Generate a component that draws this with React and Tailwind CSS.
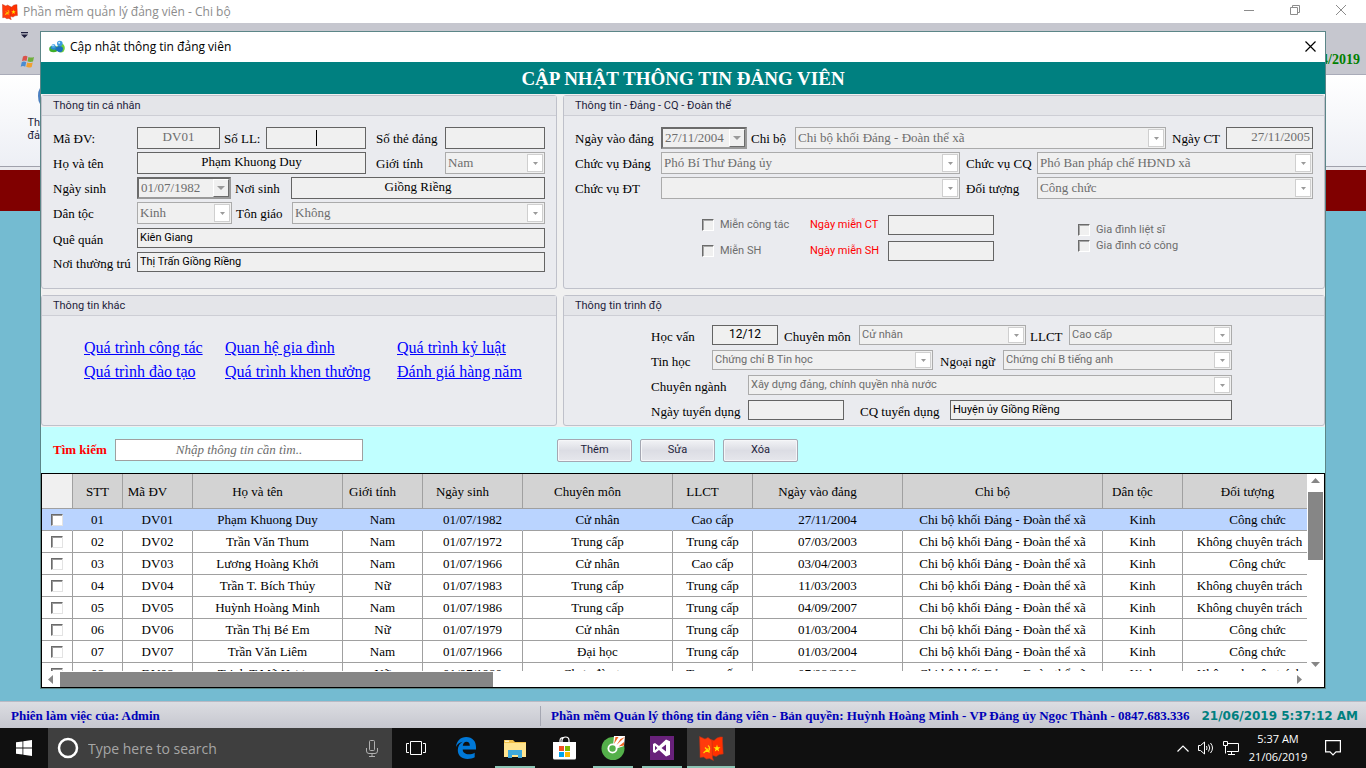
import React from 'react';

const COLUMNS = [
    { title: 'STT', width: 'w-[50px]' },
    { title: 'Mã ĐV', width: 'w-[70px]' },
    { title: 'Họ và tên', width: 'w-[150px]' },
    { title: 'Giới tính', width: 'w-[80px]' },
    { title: 'Ngày sinh', width: 'w-[100px]' },
    { title: 'Chuyên môn', width: 'w-[150px]' },
    { title: 'LLCT', width: 'w-[80px]' },
    { title: 'Ngày vào đảng', width: 'w-[150px]' },
    { title: 'Chi bộ', width: 'w-[200px]' },
    { title: 'Dân tộc', width: 'w-[80px]' },
    { title: 'Đối tượng', width: 'w-[150px]' },
];

const CHI_BO = 'Chi bộ khối Đảng - Đoàn thể xã';

const MEMBERS = [
    ['01', 'DV01', 'Phạm Khuong Duy', 'Nam', '01/07/1982', 'Cử nhân', 'Cao cấp', '27/11/2004', CHI_BO, 'Kinh', 'Công chức'],
    ['02', 'DV02', 'Trần Văn Thum', 'Nam', '01/07/1972', 'Trung cấp', 'Trung cấp', '07/03/2003', CHI_BO, 'Kinh', 'Không chuyên trách'],
    ['03', 'DV03', 'Lương Hoàng Khởi', 'Nam', '01/07/1966', 'Cử nhân', 'Cao cấp', '03/04/2003', CHI_BO, 'Kinh', 'Công chức'],
    ['04', 'DV04', 'Trần T. Bích Thủy', 'Nữ', '01/07/1983', 'Trung cấp', 'Trung cấp', '11/03/2003', CHI_BO, 'Kinh', 'Không chuyên trách'],
    ['05', 'DV05', 'Huỳnh Hoàng Minh', 'Nam', '01/07/1986', 'Trung cấp', 'Trung cấp', '04/09/2007', CHI_BO, 'Kinh', 'Không chuyên trách'],
    ['06', 'DV06', 'Trần Thị Bé Em', 'Nữ', '01/07/1979', 'Cử nhân', 'Trung cấp', '01/03/2004', CHI_BO, 'Kinh', 'Công chức'],
    ['07', 'DV07', 'Trần Văn Liêm', 'Nam', '01/07/1966', 'Đại học', 'Trung cấp', '01/03/2004', CHI_BO, 'Kinh', 'Công chức'],
    ['08', 'DV08', 'Trịnh T.Mỹ Hương', 'Nữ', '01/07/1980', 'Chưa đào tạo', 'Trung cấp', '07/08/2013', CHI_BO, 'Kinh', 'Không chuyên trách'],
];

const SERIF = "font-['Liberation_Serif',serif]";
const SANS = "font-['Roboto',sans-serif]";

/* ---------- form parts ---------- */

function Label({ htmlFor, className = '', children }) {
    return (
        <label htmlFor={htmlFor} className={`shrink-0 whitespace-nowrap pt-[3px] text-[13px] leading-[17px] text-black ${className}`}>
            {children}
        </label>
    );
}

function TextField({ id, value = '', className = '', textClass = 'text-black', height = 'h-[22px]' }) {
    return (
        <input
            id={id}
            type="text"
            defaultValue={value}
            className={`block min-w-0 border border-[#646464] bg-[#f0f0f0] px-0.5 pb-0.5 outline-none ${height} ${textClass} ${className}`}
        />
    );
}

function SelectField({ id, value = '', className = '', textClass = 'pb-0.5 text-[13px]', height = 'h-[22px]' }) {
    return (
        <div className={`relative min-w-0 ${height} ${className}`}>
            <select
                id={id}
                defaultValue={value}
                className={`block h-full w-full appearance-none border border-[#ababab] bg-[#f0f0f0] pl-0.5 text-[#6d6d6d] outline-none ${textClass}`}
            >
                <option value={value}>{value}</option>
            </select>
            <span className="pointer-events-none absolute inset-y-[2px] right-[2px] flex w-4 items-center justify-center border border-[#cfcfcf] bg-white">
                <svg width="5" height="3" viewBox="0 0 5 3" fill="#9a9a9a">
                    <path d="M0 0h5L2.5 3z" />
                </svg>
            </span>
        </div>
    );
}

function DateField({ id, value, className = '' }) {
    return (
        <div className={`flex h-[22px] border-2 border-t-[#6b6b6b] border-l-[#6b6b6b] border-r-[#9a9a9a] border-b-[#9a9a9a] bg-[#f0f0f0] ${className}`}>
            <input id={id} type="text" defaultValue={value} className="w-0 flex-1 pl-0.5 text-[13px] text-[#6d6d6d] outline-none" />
            <button
                type="button"
                aria-label="Chọn ngày"
                className="flex w-4 items-center justify-center border border-t-white border-l-white border-r-[#6b6b6b] border-b-[#6b6b6b] bg-[#f0f0f0]"
            >
                <svg width="8" height="4" viewBox="0 0 8 4" fill="#9a9a9a">
                    <path d="M0 0h8L4 4z" />
                </svg>
            </button>
        </div>
    );
}

function CheckField({ id, children }) {
    return (
        <div className="flex h-4 items-center gap-1.5">
            <input
                id={id}
                type="checkbox"
                className="size-3 appearance-none border border-t-[#6b6b6b] border-l-[#6b6b6b] border-r-white border-b-white bg-[#f0f0f0] shadow-[inset_1px_1px_0_#a8a8a8]"
            />
            <label htmlFor={id} className={`whitespace-nowrap text-[11px] text-[#6d6d6d] ${SANS}`}>
                {children}
            </label>
        </div>
    );
}

function Group({ title, className = '', children }) {
    return (
        <fieldset className="min-w-0 rounded-[3px] border border-[#bfc1ca] bg-[#eaebef]">
            <h2 className={`h-5 border-b border-[#cdced5] bg-[#e4e5e9] px-[11px] text-[11px] leading-5 text-[#1e1e3c] ${SANS}`}>{title}</h2>
            <div className={className}>{children}</div>
        </fieldset>
    );
}

/* ---------- groups ---------- */

function PersonalGroup() {
    return (
        <Group title="Thông tin cá nhân" className="flex flex-col gap-1 px-[11px] pt-[11px] pb-4">
            <div className="flex flex-col gap-[3px]">
                <div className="flex">
                    <Label htmlFor="ma-dv" className="w-[84px]">Mã ĐV:</Label>
                    <TextField id="ma-dv" value="DV01" className="w-[83px] text-center" textClass="text-[13px] text-[#6d6d6d]" />
                    <Label htmlFor="so-ll" className="ml-1 w-[42px]">Số LL:</Label>
                    <div className="relative w-[100px]">
                        <TextField id="so-ll" className="w-full text-center text-[13px]" />
                        <span className="absolute top-[3px] left-1/2 h-4 w-px bg-black" />
                    </div>
                    <Label htmlFor="so-the" className="ml-2.5 w-[69px]">Số thẻ đảng</Label>
                    <TextField id="so-the" className="flex-1 text-[13px]" />
                </div>
                <div className="flex">
                    <Label htmlFor="ho-ten" className="w-[84px]">Họ và tên</Label>
                    <TextField id="ho-ten" value="Phạm Khuong Duy" className="w-[229px] text-center text-[13px]" />
                    <Label htmlFor="gioi-tinh" className="ml-2.5 w-[69px]">Giới tính</Label>
                    <SelectField id="gioi-tinh" value="Nam" className="flex-1" />
                </div>
                <div className="flex">
                    <Label htmlFor="ngay-sinh" className="w-[84px]">Ngày sinh</Label>
                    <DateField id="ngay-sinh" value="01/07/1982" className="w-[94px]" />
                    <Label htmlFor="noi-sinh" className="ml-1 w-14">Nơi sinh</Label>
                    <TextField id="noi-sinh" value="Giồng Riềng" className="flex-1 text-center text-[13px]" />
                </div>
                <div className="flex">
                    <Label htmlFor="dan-toc" className="w-[84px]">Dân tộc</Label>
                    <SelectField id="dan-toc" value="Kinh" className="w-[95px]" />
                    <Label htmlFor="ton-giao" className="ml-1 w-14">Tôn giáo</Label>
                    <SelectField id="ton-giao" value="Không" className="flex-1" />
                </div>
            </div>
            <div className="flex flex-col gap-1">
                <div className="flex">
                    <Label htmlFor="que-quan" className="w-[84px]">Quê quán</Label>
                    <TextField id="que-quan" value="Kiên Giang" height="h-5" className={`flex-1 text-[11px] ${SANS}`} />
                </div>
                <div className="flex">
                    <Label htmlFor="thuong-tru" className="w-[84px]">Nơi thường trú</Label>
                    <TextField id="thuong-tru" value="Thị Trấn Giồng Riềng" height="h-5" className={`flex-1 text-[11px] ${SANS}`} />
                </div>
            </div>
        </Group>
    );
}

function PartyGroup() {
    return (
        <Group title="Thông tin - Đảng - CQ - Đoàn thể" className="px-[11px] pt-[11px] pb-4">
            <div className="flex flex-col gap-[3px]">
                <div className="flex">
                    <Label htmlFor="ngay-vao" className="w-[86px]">Ngày vào đảng</Label>
                    <DateField id="ngay-vao" value="27/11/2004" className="w-[86px]" />
                    <Label htmlFor="chi-bo" className="ml-1 w-11">Chi bộ</Label>
                    <SelectField id="chi-bo" value="Chi bộ khối Đảng - Đoàn thể xã" className="flex-1" />
                    <Label htmlFor="ngay-ct" className="ml-1.5 w-[54px]">Ngày CT</Label>
                    <TextField id="ngay-ct" value="27/11/2005" className="w-[87px] text-right" textClass="text-[13px] text-[#6d6d6d]" />
                </div>
                <div className="flex">
                    <Label htmlFor="cv-dang" className="w-[86px]">Chức vụ Đảng</Label>
                    <SelectField id="cv-dang" value="Phó Bí Thư Đảng ủy" className="w-[299px]" />
                    <Label htmlFor="cv-cq" className="ml-1.5 w-[71px]">Chức vụ CQ</Label>
                    <SelectField id="cv-cq" value="Phó Ban pháp chế HĐND xã" className="flex-1" />
                </div>
                <div className="flex">
                    <Label htmlFor="cv-dt" className="w-[86px]">Chức vụ ĐT</Label>
                    <SelectField id="cv-dt" className="w-[299px]" />
                    <Label htmlFor="doi-tuong" className="ml-1.5 w-[71px]">Đối tượng</Label>
                    <SelectField id="doi-tuong" value="Công chức" className="flex-1" />
                </div>
            </div>
            <div className="mt-4 flex items-center pl-[127px]">
                <div className="flex w-[108px] flex-col gap-2.5">
                    <CheckField id="mien-ct">Miễn công tác</CheckField>
                    <CheckField id="mien-sh">Miễn SH</CheckField>
                </div>
                <div className="flex flex-col gap-1.5">
                    <div className="flex items-center">
                        <label htmlFor="ngay-mien-ct" className={`w-[78px] text-[11px] text-[#ff0000] ${SANS}`}>Ngày miễn CT</label>
                        <TextField id="ngay-mien-ct" height="h-5" className="w-[106px] text-[13px]" />
                    </div>
                    <div className="flex items-center">
                        <label htmlFor="ngay-mien-sh" className={`w-[78px] text-[11px] text-[#ff0000] ${SANS}`}>Ngày miễn SH</label>
                        <TextField id="ngay-mien-sh" height="h-5" className="w-[106px] text-[13px]" />
                    </div>
                </div>
                <div className="ml-[84px] flex flex-col">
                    <CheckField id="gd-ls">Gia đình liệt sĩ</CheckField>
                    <CheckField id="gd-cc">Gia đình có công</CheckField>
                </div>
            </div>
        </Group>
    );
}

const LINKS = [
    'Quá trình công tác', 'Quan hệ gia đình', 'Quá trình kỷ luật',
    'Quá trình đào tạo', 'Quá trình khen thưởng', 'Đánh giá hàng năm',
];

function OtherGroup() {
    return (
        <Group title="Thông tin khác" className="grid grid-cols-[141px_172px_1fr] pt-5 pl-[42px]">
            {LINKS.map((text) => (
                <a key={text} href="#" className="h-6 text-base leading-6 whitespace-nowrap text-[#0000ff] underline">{text}</a>
            ))}
        </Group>
    );
}

function EducationGroup() {
    const small = `text-[11px] ${SANS}`;
    return (
        <Group title="Thông tin trình độ" className="flex flex-col gap-[5px] pt-[9px] pr-[92px] pb-[5px] pl-[87px]">
            <div className="flex">
                <Label htmlFor="hoc-van" className="w-[61px]">Học vấn</Label>
                <TextField id="hoc-van" value="12/12" height="h-5" className={`w-[66px] text-center text-xs ${SANS}`} />
                <Label htmlFor="chuyen-mon" className="ml-1.5 w-[75px]">Chuyên môn</Label>
                <SelectField id="chuyen-mon" value="Cử nhân" height="h-5" className="flex-1" textClass={small} />
                <Label htmlFor="llct" className="ml-1 w-[39px]">LLCT</Label>
                <SelectField id="llct" value="Cao cấp" height="h-5" className="w-[163px]" textClass={small} />
            </div>
            <div className="flex">
                <Label htmlFor="tin-hoc" className="w-[61px]">Tin học</Label>
                <SelectField id="tin-hoc" value="Chứng chỉ B Tin học" height="h-5" className="flex-1" textClass={small} />
                <Label htmlFor="ngoai-ngu" className="ml-[7px] w-[63px]">Ngoại ngữ</Label>
                <SelectField id="ngoai-ngu" value="Chứng chỉ B tiếng anh" height="h-5" className="w-[229px]" textClass={small} />
            </div>
            <div className="flex">
                <Label htmlFor="chuyen-nganh" className="w-[97px]">Chuyên ngành</Label>
                <SelectField id="chuyen-nganh" value="Xây dựng đảng, chính quyền nhà nước" height="h-5" className="flex-1" textClass={small} />
            </div>
            <div className="flex">
                <Label htmlFor="ngay-td" className="w-[97px]">Ngày tuyển dụng</Label>
                <TextField id="ngay-td" height="h-5" className="w-24 text-[13px]" />
                <Label htmlFor="cq-td" className="ml-4 w-[90px]">CQ tuyển dụng</Label>
                <TextField id="cq-td" value="Huyện ủy Giồng Riềng" height="h-5" className={`flex-1 text-[11px] ${SANS}`} />
            </div>
        </Group>
    );
}

function SearchBar() {
    return (
        <div className="mt-px flex h-[46px] items-center bg-[#c0ffff] px-3">
            <label htmlFor="tim-kiem" className="w-[62px] text-[13px] font-bold text-[#ff0000]">Tìm kiếm</label>
            <input
                id="tim-kiem"
                type="text"
                placeholder="Nhập thông tin cần tìm.."
                className="mr-[194px] h-[22px] w-[248px] border border-[#a0a0a0] bg-white text-center text-[13px] italic outline-none placeholder:text-[#6d6d6d]"
            />
            <div className="flex gap-2">
                {['Thêm', 'Sửa', 'Xóa'].map((text) => (
                    <button
                        key={text}
                        type="button"
                        className={`h-[23px] w-[75px] rounded-[2px] border border-[#a5a7b2] bg-linear-to-b from-[#f2f3f6] via-[#dcdde4] to-[#e6e7ec] text-[11px] text-[#1e1e3c] shadow-[inset_0_0_0_1px_#f5f6f8] ${SANS}`}
                    >
                        {text}
                    </button>
                ))}
            </div>
        </div>
    );
}

/* ---------- table ---------- */

function RowCheck({ label }) {
    return (
        <input
            type="checkbox"
            aria-label={label}
            className="mx-auto block size-3 appearance-none border border-t-[#6b6b6b] border-l-[#6b6b6b] border-r-[#e3e3e3] border-b-[#e3e3e3] bg-white shadow-[inset_1px_1px_0_#9a9a9a]"
        />
    );
}

function MemberTable() {
    return (
        <div className="border border-black bg-white">
            <div className="flex">
                <div className="h-[197px] min-w-0 flex-1 overflow-hidden">
                    <table className="w-[1291px] table-fixed border-separate border-spacing-0 text-[13px] text-black">
                        <thead>
                            <tr className="h-[35px]">
                                <th className="w-[31px] border-r border-b border-[#a0a0a0] bg-[#f0f0f0] p-0" />
                                {COLUMNS.map((col) => (
                                    <th
                                        key={col.title}
                                        className={`border-r border-b border-[#a0a0a0] bg-[#d3d3d3] p-0 pt-0.5 font-normal ${col.width} ${col.title === 'STT' ? '' : 'pr-5'}`}
                                    >
                                        {col.title}
                                    </th>
                                ))}
                            </tr>
                        </thead>
                        <tbody>
                            {MEMBERS.map((row, i) => {
                                const cell = i === 0 ? 'border-r-[#bad4ff] bg-[#bad4ff]' : 'border-r-[#a0a0a0]';
                                return (
                                    <tr key={row[0]} className="h-[22px]">
                                        <td className={`border-r border-b border-b-[#a0a0a0] p-0 ${cell}`}>
                                            <RowCheck label={row[1]} />
                                        </td>
                                        {row.map((text, j) => (
                                            <td
                                                key={COLUMNS[j].title}
                                                className={`overflow-hidden border-r border-b border-b-[#a0a0a0] p-0 text-center leading-5 whitespace-nowrap ${cell} ${text === 'Không chuyên trách' ? 'pr-4' : ''}`}
                                            >
                                                {text}
                                            </td>
                                        ))}
                                    </tr>
                                );
                            })}
                        </tbody>
                    </table>
                </div>
                <div className="flex w-[17px] flex-col items-center py-1">
                    <svg width="9" height="5" viewBox="0 0 9 5" fill="#868686"><path d="M4.5 0L9 5H0z" /></svg>
                    <div className="mt-[9px] h-[68px] w-[15px] bg-[#868686]" />
                    <svg className="mt-auto" width="9" height="5" viewBox="0 0 9 5" fill="#868686"><path d="M0 0h9L4.5 5z" /></svg>
                </div>
            </div>
            <div className="flex h-4 items-center justify-between pr-[22px] pl-1.5">
                <div className="flex items-center gap-[7px]">
                    <svg width="5" height="9" viewBox="0 0 5 9" fill="#868686"><path d="M5 0v9L0 4.5z" /></svg>
                    <div className="h-[15px] w-[433px] bg-[#868686]" />
                </div>
                <svg width="5" height="9" viewBox="0 0 5 9" fill="#868686"><path d="M0 0l5 4.5L0 9z" /></svg>
            </div>
        </div>
    );
}

/* ---------- icons ---------- */

function FlagIcon({ size }) {
    return (
        <svg width={size} height={size} viewBox="0 0 25 25">
            <path d="M10 3l5 1.500 3-2.500 3-1h2.500v4l.7 13-4 .5-3 2-7-2z" fill="#ff3000" stroke="#b8331a" strokeWidth=".6" />
            <path d="M.5.500L6 3l3-1.500 4 3 .5 17 1 3-4-2-3 .5-3-2-3.500.500L1 15z" fill="#ff3a0c" stroke="#b8331a" strokeWidth=".6" />
            <path d="M4.500 17l5-4.500M6 11.500l4.500 5M9 9.500c2.500 1.500 2 5.500-.5 6H5.500" stroke="#ffd800" fill="none" strokeWidth="1.200" />
            <path d="M18 8.500l.8 2.700h2.700l-2.100 1.700.8 2.700-2.200-1.600-2.200 1.600.8-2.700-2.100-1.700h2.700z" fill="#ffe600" />
        </svg>
    );
}

function DialogIcon() {
    return (
        <svg width="16" height="14" viewBox="0 0 16 14">
            <ellipse cx="4.500" cy="9" rx="4.300" ry="3.200" fill="#3fae2a" />
            <ellipse cx="12" cy="8" rx="3.800" ry="4.500" fill="#6ccf3c" />
            <path d="M1.500 8.500C1.500 5 7 4.500 7 7.500s-2 3-5.500 1z" fill="#2a86cf" />
            <circle cx="4.500" cy="6" r="2" fill="#4aa6e6" />
            <path d="M6.500 9.500c0-4.500 7.500-4.500 7.500-1 0 4-4 5.500-7.500 1z" fill="#1b6fbd" />
            <circle cx="10.800" cy="3.500" r="2.800" fill="#3a9ade" />
            <circle cx="10.200" cy="2.800" r="1" fill="#c8ebff" />
            <circle cx="4" cy="5.400" r=".8" fill="#c8ebff" />
        </svg>
    );
}

function WindowsFlag() {
    return (
        <svg width="15" height="14" viewBox="0 0 15 14">
            <path d="M3 1.500c2-1 3-.8 4.500 0L6.500 6C5 5.300 3.500 5.300 2 6z" fill="#d9534a" />
            <path d="M8.500 2c2 .8 3.500.8 5.500 0l-1 4.500c-2 .7-4 .6-5.500-.2z" fill="#6fae3c" />
            <path d="M1.700 7.200c1.500-.8 3-.8 4.500 0l-1 4.500c-1.500-.8-3-.8-4.500 0z" fill="#4a8cd2" />
            <path d="M7.200 7.500c2 .8 3.500.8 5.500 0l-1 4.500c-2 .9-4 .8-5.500-.2z" fill="#f0a030" />
        </svg>
    );
}

function EdgeIcon() {
    return (
        <svg width="20" height="22" viewBox="0 0 20 22" fill="#0078d7">
            <path d="M0 10C.5 4 4.500 0 10.200 0 16.500 0 20 4.400 20 10v2.600H6.700c.2 3.300 2.800 4.700 6 4.700 2.300 0 4.300-.6 6-1.600v4.600c-2 1.100-4.400 1.700-7.200 1.700C5.500 22 1.800 18.500 1.800 13c0-3.600 1.900-6.600 5-8.200C3.500 5.300 1.300 7.300 0 10zm6.800-1.300h7c0-2.500-1-3.900-3.300-3.900-2 0-3.300 1.500-3.700 3.900z" />
        </svg>
    );
}

function FolderIcon() {
    return (
        <svg width="22" height="19" viewBox="0 0 22 19">
            <path d="M0 1h9l2 2h11v15H0z" fill="#f0c04a" />
            <path d="M0 4h22v14H0z" fill="#ffe48f" />
            <path d="M4 19v-8h14v8h-4v-3H8v3z" fill="#3ea9dc" />
            <path d="M1 1.500h4V3H1z" fill="#fff2c0" />
        </svg>
    );
}

function StoreIcon() {
    return (
        <svg width="24" height="24" viewBox="0 0 24 24">
            <path d="M8 7V4.500a3 3 0 0 1 4-2.800M10 7V4.500a3.500 3.500 0 0 1 7 0V7" fill="none" stroke="#fff" strokeWidth="1.200" />
            <path d="M1 6h23v16q0 1.500-1.500 1.500h-20Q1 23.500 1 22z" fill="#fff" />
            <path d="M7 10h5v5H7z" fill="#f25022" />
            <path d="M13 10h5v5h-5z" fill="#7fba00" />
            <path d="M7 16h5v5H7z" fill="#00a4ef" />
            <path d="M13 16h5v5h-5z" fill="#ffb900" />
        </svg>
    );
}

function BrowserIcon() {
    return (
        <svg width="24" height="24" viewBox="0 0 24 24">
            <circle cx="12" cy="12.500" r="11.500" fill="#54b04a" />
            <path d="M12 10l1-10h11l-1 10-9 3z" fill="#fff" />
            <path d="M13 8l1.500-7h3zM15.500 9l4-6L24 1zM17.500 10.500L23 6v3.500z" fill="#f26522" />
            <circle cx="11.500" cy="12.500" r="5" fill="#fff" />
            <circle cx="11.500" cy="12.500" r="3.200" fill="#54b04a" />
        </svg>
    );
}

function StudioIcon() {
    return (
        <svg width="24" height="24" viewBox="0 0 24 24">
            <path d="M0 0h24v24H0z" fill="#68217a" />
            <path d="M16 3.500l4 1.700v13.600l-4 1.700-7-6.500-4 3-2-1V8l2-1 4 3zM5 9.700v4.600L7.400 12zM16 8.500L11.500 12l4.500 3.500z" fill="#fff" fillRule="evenodd" />
        </svg>
    );
}

/* ---------- taskbar ---------- */

function TaskButton({ label, active = false, running = false, className = '', children }) {
    return (
        <button
            type="button"
            aria-label={label}
            className={`relative flex h-10 w-12 items-center justify-center ${active ? 'bg-[#3a3a3a]' : ''} ${className}`}
        >
            {children}
            {running && <span className={`absolute bottom-0 h-0.5 bg-[#8cc4b4] ${active ? 'inset-x-0' : 'inset-x-1'}`} />}
        </button>
    );
}

function Taskbar() {
    return (
        <footer className="flex h-10 bg-[#101010] text-white">
            <TaskButton label="Start">
                <svg width="16" height="16" viewBox="0 0 16 16" fill="#fff">
                    <path d="M0 2.300L6.500 1.400v6.200H0zM7.300 1.300L16 0v7.600H7.300zM0 8.400h6.500v6.200L0 13.700zM7.300 8.400H16V16l-8.700-1.300z" />
                </svg>
            </TaskButton>
            <div className="flex w-[344px] items-center bg-[#3f3f3f] pr-3.5 pl-[9px]">
                <svg width="22" height="22" viewBox="0 0 22 22"><circle cx="11" cy="11" r="9" fill="none" stroke="#fff" strokeWidth="2.500" /></svg>
                <input
                    type="text"
                    aria-label="Search"
                    placeholder="Type here to search"
                    className="ml-[9px] min-w-0 flex-1 pt-px font-['Open_Sans',sans-serif] text-sm outline-none placeholder:text-[#a6a6a6]"
                />
                <svg width="12" height="17" viewBox="0 0 12 17" fill="none" stroke="#b0b0b0">
                    <path d="M3.500 1.500q0-1 1-1h3q1 0 1 1v8q0 1-1 1h-3q-1 0-1-1zM.5 8v3q0 2.500 2.500 2.500h6q2.500 0 2.500-2.500V8M6 13.500v3M3 16.500h6" />
                </svg>
            </div>
            <div className="flex gap-px">
                <TaskButton label="Task view" className="mr-px">
                    <svg width="20" height="14" viewBox="0 0 20 14" fill="none" stroke="#fff">
                        <path d="M4.500.5h11v13h-11zM3 2.500H.5v9H3M17 2.500h2.500v9H17" />
                    </svg>
                </TaskButton>
                <TaskButton label="Edge"><EdgeIcon /></TaskButton>
                <TaskButton label="File Explorer" running><FolderIcon /></TaskButton>
                <TaskButton label="Store"><StoreIcon /></TaskButton>
                <TaskButton label="Browser" running><BrowserIcon /></TaskButton>
                <TaskButton label="Visual Studio" running><StudioIcon /></TaskButton>
                <TaskButton label="Đảng viên" running active><FlagIcon size={25} /></TaskButton>
            </div>
            <div className="ml-auto flex items-center pr-[25px]">
                <svg width="12" height="7" viewBox="0 0 12 7" fill="none" stroke="#fff" strokeWidth="1.200"><path d="M.5 6.500L6 1l5.500 5.500" /></svg>
                <svg className="ml-[9px]" width="17" height="14" viewBox="0 0 17 14" fill="none" stroke="#fff">
                    <path d="M.5 4.500h2l4-3.500v12l-4-3.500h-2zM8.500 5q1 2 0 4M10.500 3.500q2.500 3.500 0 7M12.500 2q4 5 0 10" />
                </svg>
                <svg className="ml-2" width="16" height="14" viewBox="0 0 16 14" fill="none" stroke="#fff">
                    <path d="M5 2.500h10.500v8H4M.5.500h4v4h-4zM2.500 4.500v8M5 13.500h7M8.500 10.500v3" />
                </svg>
                <div className="ml-2 w-[62px] text-center font-['Open_Sans',sans-serif] text-[11px] leading-[18px] whitespace-nowrap">
                    <div>5:37 AM</div>
                    <div>21/06/2019</div>
                </div>
                <svg className="ml-4" width="16" height="16" viewBox="0 0 16 16" fill="none" stroke="#fff" strokeWidth="1.200">
                    <path d="M.6.6h14.800v11.300H11L8 15l-3-3.100H.6z" />
                </svg>
            </div>
        </footer>
    );
}

/* ---------- windows ---------- */

function MainWindow() {
    return (
        <>
            <header className="flex h-[23px] items-center bg-white pr-5 pl-0.5">
                <FlagIcon size={16} />
                <h1 className="ml-[5px] flex-1 font-['Open_Sans',sans-serif] text-xs text-[#8c8c8c]">Phần mềm quản lý đảng viên - Chi bộ</h1>
                <div className="flex items-center gap-9 pb-1 text-[#8c8c8c]">
                    <svg width="10" height="10" viewBox="0 0 10 10" stroke="currentColor"><path d="M0 5.500h10" /></svg>
                    <svg width="10" height="10" viewBox="0 0 10 10" fill="none" stroke="currentColor"><path d="M.5 2.500h7v7h-7zM2.500 2V.5h7v7H8" /></svg>
                    <svg width="10" height="10" viewBox="0 0 10 10" stroke="currentColor"><path d="M0 0l10 10M10 0L0 10" /></svg>
                </div>
            </header>
            <div className="flex h-[52px] justify-between border-b border-[#a9abb8] bg-[#c6c7cf] pt-[9px] pr-1.5 pl-5">
                <div className="flex flex-col gap-[17px]">
                    <svg width="9" height="6" viewBox="0 0 9 6" fill="#1e1e3c"><path d="M1 0h7v1.200H1zM1 2.500h7L4.500 6z" /></svg>
                    <WindowsFlag />
                </div>
                <span className="self-end pb-1 text-sm font-bold text-[#008000]">4/2019</span>
            </div>
            <div className="flex h-[92px] border-b border-[#a0a1ac] bg-linear-to-b from-white to-[#edeff5]">
                <div className={`flex w-10 flex-col items-end pt-3 text-[11px] leading-[13px] text-[#1e1e3c] ${SANS}`}>
                    <svg className="mb-[11px]" width="2" height="18" viewBox="0 0 2 18"><path d="M2 1Q0 4 0 9t2 8z" fill="#4a7fc0" /></svg>
                    <span>Th</span>
                    <span>đả</span>
                </div>
            </div>
            <div className="h-[3px] bg-[#e8e9ee]" />
            <div className="h-[41px] bg-[#800000]" />
            <div className="flex-1 bg-[#74bbd1]" />
            <div className="flex h-[27px] items-center border-t border-[#b9bac4] bg-linear-to-b from-[#dcdde2] to-[#c6c7cf] pt-0.5 pr-2 pl-[11px] text-[13px] font-bold whitespace-nowrap text-[#0000b8]">
                <span className="flex-1">Phiên làm việc của: Admin</span>
                <span className="border-l border-[#a5a7b2] pl-2.5">
                    Phần mềm Quản lý thông tin đảng viên - Bản quyền: Huỳnh Hoàng Minh - VP Đảng ủy Ngọc Thành - 0847.683.336
                </span>
                <time className="ml-3 font-['DejaVu_Sans',sans-serif] text-xs text-[#008080]">21/06/2019 5:37:12 AM</time>
            </div>
        </>
    );
}

function MemberDialog() {
    return (
        <section role="dialog" aria-label="Cập nhật thông tin đảng viên" className="absolute inset-x-10 top-[31px] border border-[#5c8688] bg-[#f0f0f0]">
            <div className="flex h-[30px] items-center bg-white pr-[9px] pl-2">
                <DialogIcon />
                <h2 className="ml-[5px] flex-1 font-['Open_Sans',sans-serif] text-xs text-black">Cập nhật thông tin đảng viên</h2>
                <button type="button" aria-label="Đóng" className="pb-0.5">
                    <svg width="11" height="11" viewBox="0 0 11 11" stroke="#000" strokeWidth="1.200"><path d="M.5.500l10 10M10.500.500l-10 10" /></svg>
                </button>
            </div>
            <h1 className="mb-px h-8 bg-[#008080] pt-0.5 text-center text-[19px] leading-[30px] font-bold text-white">CẬP NHẬT THÔNG TIN ĐẢNG VIÊN</h1>
            <form className="grid grid-cols-[516fr_762fr] gap-1.5" onSubmit={(e) => e.preventDefault()}>
                <PersonalGroup />
                <PartyGroup />
                <OtherGroup />
                <EducationGroup />
            </form>
            <SearchBar />
            <MemberTable />
        </section>
    );
}

export default function App() {
    return (
        <div className={`relative flex min-h-screen flex-col overflow-hidden ${SERIF}`}>
            <MainWindow />
            <MemberDialog />
            <Taskbar />
        </div>
    );
}
